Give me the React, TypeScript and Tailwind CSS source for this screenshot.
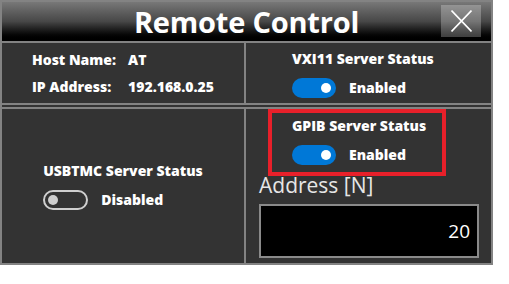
import React from 'react';

const FONT = { fontFamily: '"Open Sans", "Noto Sans", Arial, sans-serif' };

function Toggle({ on }: { on: boolean }) {
  if (on) {
    return (
      <span className="relative inline-block h-[20px] w-[44px] rounded-full bg-[#0078d7]">
        <span className="absolute right-[5px] top-[5px] h-[10px] w-[10px] rounded-full bg-white" />
      </span>
    );
  }
  return (
    <span className="relative inline-block h-[20px] w-[45px] rounded-full border-2 border-[#cfcfcf]">
      <span className="absolute left-[3px] top-[3px] h-[10px] w-[10px] rounded-full bg-[#cfcfcf]" />
    </span>
  );
}

function StatusBlock({ title, on }: { title: string; on: boolean }) {
  return (
    <div className="flex flex-col gap-[9px]">
      <div className="text-[14px] font-extrabold leading-[18px] text-white">{title}</div>
      <div className="flex items-center gap-[13px]">
        <Toggle on={on} />
        <span className="text-[14px] font-extrabold text-white">{on ? 'Enabled' : 'Disabled'}</span>
      </div>
    </div>
  );
}

export default function App() {
  return (
    <div className="h-[284px] w-[509px] bg-white" style={FONT}>
      <div className="relative flex h-[265px] w-[493px] flex-col border-2 border-[#838383] bg-[#333333]">
        {/* title bar */}
        <div className="relative flex h-[39px] shrink-0 items-center justify-center bg-gradient-to-b from-[#787878] via-[#474747] to-black">
          <span className="text-[29px] font-bold leading-none tracking-[-0.2px] text-white">Remote Control</span>
          <button className="absolute right-[10px] top-[3px] flex h-[32px] w-[40px] items-center justify-center bg-white/25">
            <svg width="21" height="22" viewBox="0 0 21 22" fill="none" stroke="white" strokeWidth="1.6">
              <path d="M0.5 0.5L20.5 21.5M20.5 0.5L0.5 21.5" />
            </svg>
          </button>
        </div>

        {/* top section */}
        <div className="grid h-[64px] shrink-0 grid-cols-[244px_1fr] border-y-2 border-[#838383]">
          <div className="flex items-center justify-center border-r-2 border-[#838383]">
            <div className="grid grid-cols-[auto_auto] gap-x-[12px] gap-y-[8px] text-[14px] font-extrabold leading-[19px] text-white">
              <span>Host Name:</span>
              <span>AT</span>
              <span>IP Address:</span>
              <span>192.168.0.25</span>
            </div>
          </div>
          <div className="flex items-center pl-[46px] pt-[2px]">
            <StatusBlock title="VXI11 Server Status" on />
          </div>
        </div>

        {/* bottom section */}
        <div className="mt-[2px] grid flex-1 grid-cols-[244px_1fr] border-t-2 border-[#838383]">
          <div className="flex items-center justify-center border-r-2 border-[#838383]">
            <StatusBlock title="USBTMC Server Status" on={false} />
          </div>
          <div className="relative flex flex-col pl-[13px] pt-[8px]">
            <div className="pl-[33px]">
              <StatusBlock title="GPIB Server Status" on />
            </div>
            <div className="mt-[8px] text-[21px] leading-[25px] text-[#e6e6e6]">
              Address [N]
            </div>
            <div className="mt-[6px] flex h-[54px] w-[220px] items-center justify-end border-2 border-[#8a8a8a] bg-black pr-[7px] text-[19px] text-white">
              20
            </div>
            <div className="pointer-events-none absolute left-[22px] top-0 h-[67px] w-[178px] border-[4px] border-[#e8202a]" />
          </div>
        </div>
      </div>
    </div>
  );
}
